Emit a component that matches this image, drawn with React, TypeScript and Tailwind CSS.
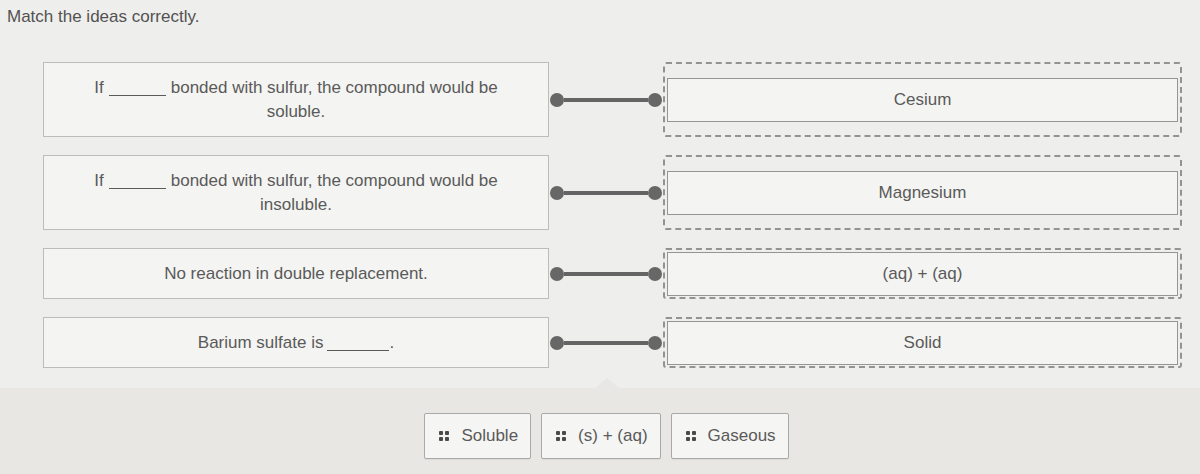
import React from "react";

function Blank({ w }: { w: string }) {
  return <span className={`inline-block ${w} h-[14px] border-b border-[#5a5a5a] align-[-3px]`} />;
}

function Connector() {
  return (
    <div className="flex w-[114px] shrink-0 items-center px-[1px]">
      <div className="h-[14px] w-[14px] rounded-full bg-[#676767]" />
      <div className="h-[4px] flex-1 bg-[#646464]" />
      <div className="h-[14px] w-[14px] rounded-full bg-[#676767]" />
    </div>
  );
}

function Row({ left, right, tall }: { left: React.ReactNode; right: string; tall?: boolean }) {
  return (
    <div className={`flex items-stretch ${tall ? "h-[75px]" : "h-[51px]"}`}>
      <div className="flex w-[506px] shrink-0 flex-col items-center justify-center border border-[#bcbcba] bg-[#f4f4f2] text-center">
        {left}
      </div>
      <Connector />
      <div className="flex w-[519px] items-center rounded-[3px] border-2 border-dashed border-[#939393] px-[2px]">
        <div className="flex h-[44px] w-full items-center justify-center border border-[#959595] bg-[#f4f4f2]">
          {right}
        </div>
      </div>
    </div>
  );
}

function Chip({ label }: { label: string }) {
  return (
    <div className="flex h-[46px] items-center rounded-[2px] border border-[#a9a9a7] bg-[#f5f5f3] pl-[14px] pr-[12px] shadow-[0_1px_1px_rgba(0,0,0,0.06)]">
      <div className="grid grid-cols-2 gap-[2px]">
        <span className="h-[4px] w-[4px] rounded-[1px] bg-[#4a4a4a]" />
        <span className="h-[4px] w-[4px] rounded-[1px] bg-[#4a4a4a]" />
        <span className="h-[4px] w-[4px] rounded-[1px] bg-[#4a4a4a]" />
        <span className="h-[4px] w-[4px] rounded-[1px] bg-[#4a4a4a]" />
      </div>
      <span className="ml-[12px]">{label}</span>
    </div>
  );
}

export default function App() {
  return (
    <div className="flex h-[474px] w-[1200px] flex-col overflow-hidden bg-[#eeeeec] font-['Liberation_Sans',Arial,sans-serif] text-[17px] leading-[24px] text-[#5a5a5a]">
      <div className="flex h-[388px] flex-col">
        <div className="pl-[7px] pt-[5px] text-[#525252]">Match the ideas correctly.</div>
        <div className="ml-[43px] mt-[33px] flex flex-col gap-[18px]">
          <Row
            tall
            right="Cesium"
            left={
              <>
                <div>
                  If<span className="mx-[5px]"><Blank w="w-[57px]" /></span>bonded with sulfur, the compound would be
                </div>
                <div>soluble.</div>
              </>
            }
          />
          <Row
            tall
            right="Magnesium"
            left={
              <>
                <div>
                  If<span className="mx-[5px]"><Blank w="w-[57px]" /></span>bonded with sulfur, the compound would be
                </div>
                <div>insoluble.</div>
              </>
            }
          />
          <Row right="(aq) + (aq)" left={<div>No reaction in double replacement.</div>} />
          <Row
            right="Solid"
            left={
              <div>
                Barium sulfate is<span className="ml-[4px]"><Blank w="w-[62px]" /></span>.
              </div>
            }
          />
        </div>
      </div>
      <div className="relative flex flex-1 justify-center gap-[10px] bg-[#e8e7e3] pl-[13px] pt-[25px]">
        <div className="absolute left-[595px] top-[-10px] h-0 w-0 border-b-[10px] border-l-[12px] border-r-[12px] border-b-[#e8e7e3] border-l-transparent border-r-transparent" />
        <Chip label="Soluble" />
        <Chip label="(s) + (aq)" />
        <Chip label="Gaseous" />
      </div>
    </div>
  );
}
